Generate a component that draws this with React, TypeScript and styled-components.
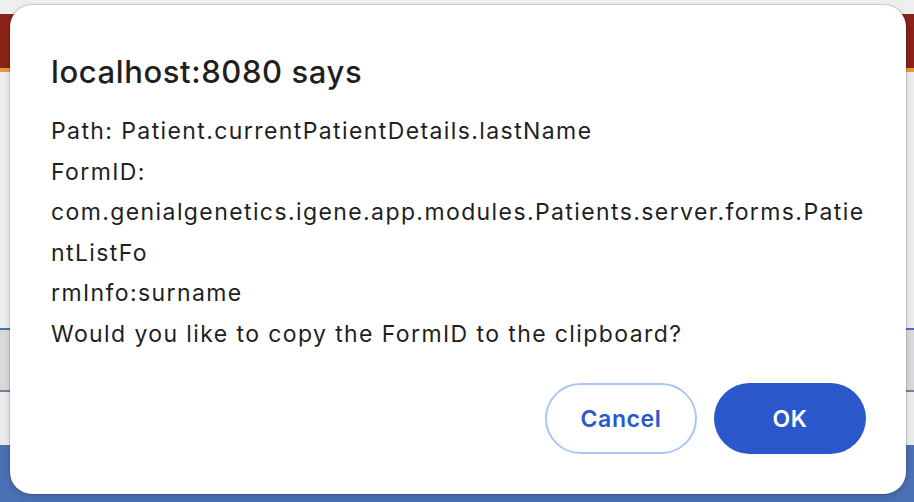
import React from "react";
import styled, { createGlobalStyle } from "styled-components";

const Global = createGlobalStyle`
  html, body { margin: 0; padding: 0; }
  body { width: 914px; height: 502px; overflow: hidden; font-family: Inter, "Noto Sans", sans-serif; }
  #root { width: 914px; height: 502px; }
`;

const Page = styled.div`
  position: relative;
  width: 914px;
  height: 502px;
  display: flex;
  flex-direction: column;
  background: #ededed;
  overflow: hidden;
`;

const Band = styled.div<{ $h: number; $bg: string }>`
  height: ${(p) => p.$h}px;
  flex: 0 0 ${(p) => p.$h}px;
  background: ${(p) => p.$bg};
`;

const FillBand = styled.div<{ $bg: string }>`
  flex: 1;
  background: ${(p) => p.$bg};
`;

const Dialog = styled.div`
  position: absolute;
  left: 10px;
  top: 5px;
  width: 896px;
  height: 489px;
  box-sizing: border-box;
  background: #ffffff;
  border-radius: 22px;
  box-shadow: 0 0 0 1px rgba(0, 0, 0, 0.12), 0 2px 6px rgba(0, 0, 0, 0.15);
  padding: 49px 40px 0 41px;
  display: flex;
  flex-direction: column;
  color: #1f1f1f;
`;

const Title = styled.h1`
  margin: 0;
  font-size: 31px;
  font-weight: 500;
  line-height: 36px;
  letter-spacing: 0.6px;
`;

const Message = styled.div`
  margin-top: 21px;
  font-size: 23px;
  line-height: 40.5px;
  font-weight: 400;
  letter-spacing: 1.4px;
`;

const Line = styled.div`
  white-space: nowrap;
`;

const Actions = styled.div`
  margin-top: 29px;
  display: flex;
  justify-content: flex-end;
  gap: 17px;
`;

const Button = styled.button<{ $primary?: boolean }>`
  width: 152px;
  height: 71px;
  border-radius: 36px;
  box-sizing: border-box;
  font-family: Inter, "Noto Sans", sans-serif;
  font-size: 23px;
  font-weight: 600;
  letter-spacing: 0.6px;
  cursor: pointer;
  border: ${(p) => (p.$primary ? "none" : "2px solid #aac6f4")};
  background: ${(p) => (p.$primary ? "#2a58cb" : "#ffffff")};
  color: ${(p) => (p.$primary ? "#ffffff" : "#2a58cb")};
`;

const lines = [
  "Path: Patient.currentPatientDetails.lastName",
  "FormID:",
  "com.genialgenetics.igene.app.modules.Patients.server.forms.Patie",
  "ntListFo",
  "rmInfo:surname",
  "Would you like to copy the FormID to the clipboard?",
];

export default function App() {
  return (
    <>
      <Global />
      <Page>
        <Band $h={14} $bg="#efefef" />
        <Band $h={54} $bg="#8b2219" />
        <Band $h={4} $bg="#df9c3c" />
        <Band $h={256} $bg="#ececec" />
        <Band $h={2} $bg="#4b6fb4" />
        <Band $h={60} $bg="#d9d9dd" />
        <Band $h={2} $bg="#7c7f98" />
        <Band $h={53} $bg="#ebebeb" />
        <FillBand $bg="#4a6fb3" />
        <Dialog>
          <Title>localhost:8080 says</Title>
          <Message>
            {lines.map((l, i) => (
              <Line key={i}>{l}</Line>
            ))}
          </Message>
          <Actions>
            <Button>Cancel</Button>
            <Button $primary>OK</Button>
          </Actions>
        </Dialog>
      </Page>
    </>
  );
}
